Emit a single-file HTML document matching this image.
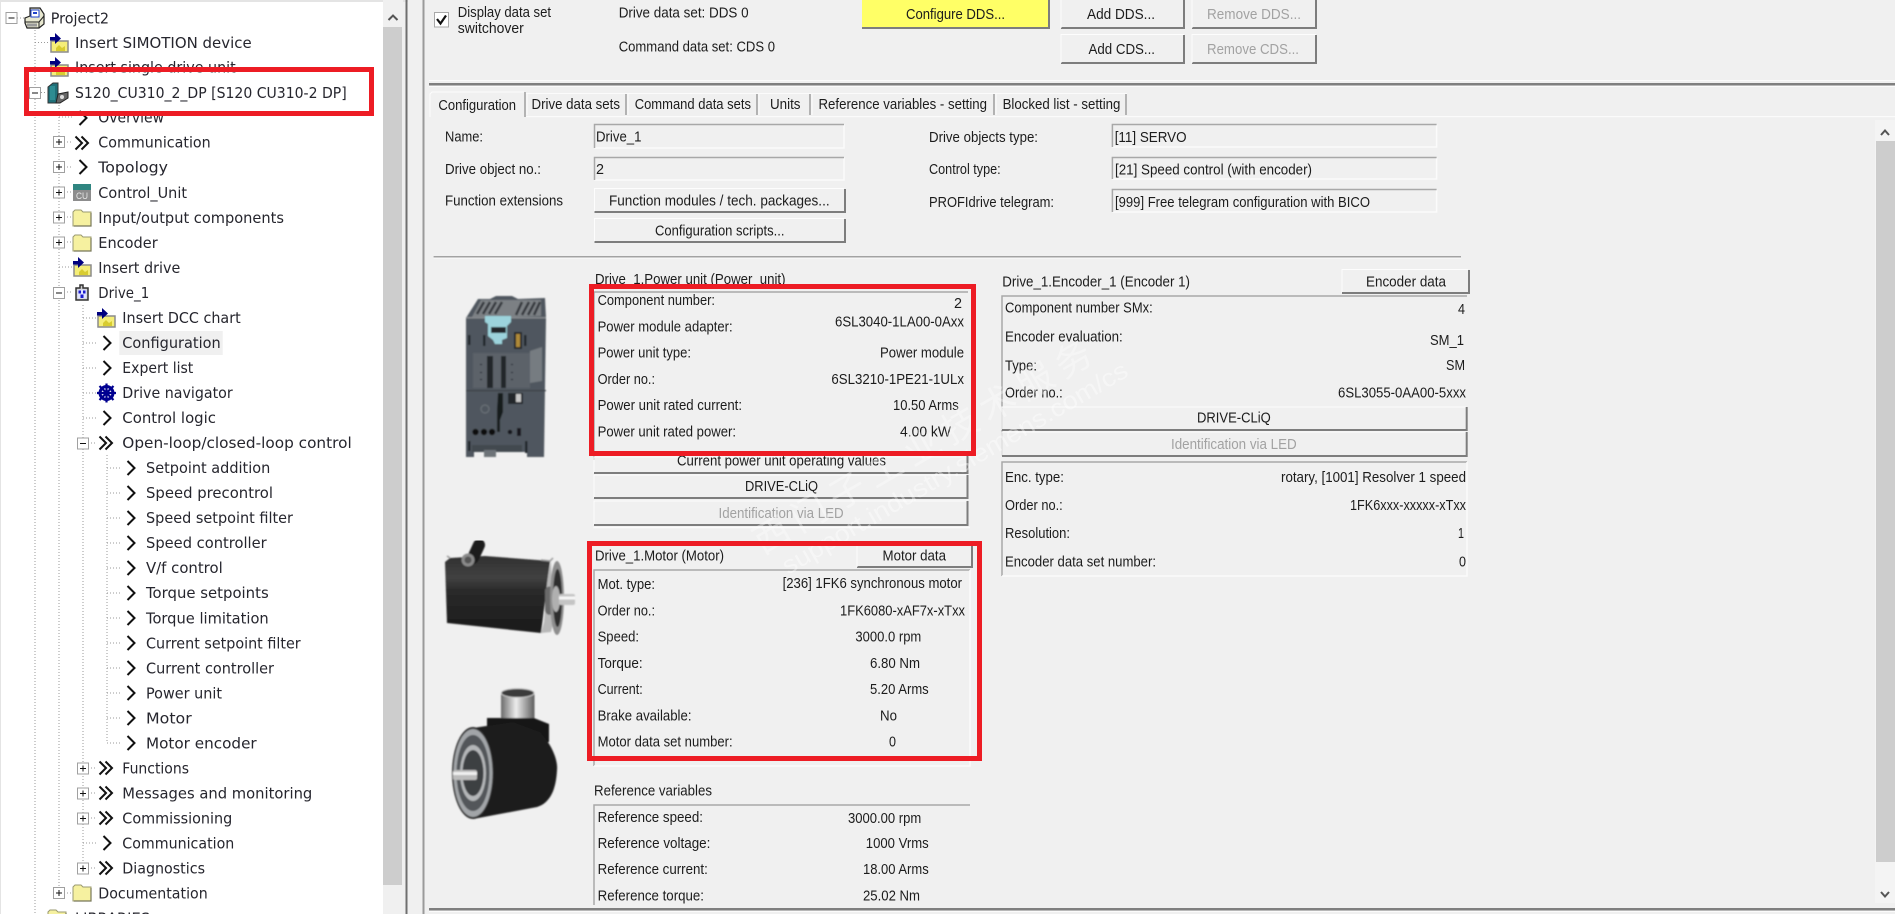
<!DOCTYPE html>
<html lang="en">
<head>
<meta charset="utf-8">
<title>Drive_1 Configuration</title>
<style>
html,body{margin:0;padding:0;width:1895px;height:914px;overflow:hidden;background:#f0f0f0}
svg{display:block;position:absolute;left:0;top:0;filter:blur(.35px)}
text{font-family:"Liberation Sans",sans-serif;font-size:14.5px;fill:#1c1c1c;white-space:pre}
.t text{font-family:"DejaVu Sans",sans-serif;font-size:15.5px;fill:#26262e}
.d{fill:#a2a2a2}
.dl{fill:none;stroke:#9a9a9a;stroke-width:1;stroke-dasharray:1 2}
.bx{fill:#fff;stroke:#a0a0a0;stroke-width:1}
.sg{fill:none;stroke:#111;stroke-width:1}
.ch{fill:none;stroke:#111;stroke-width:2}
.btn{fill:#f0f0f0}
.hi{fill:none;stroke:#fdfdfd;stroke-width:1}
.lo{fill:none;stroke:#7d7d7d;stroke-width:2}
.gs{fill:none;stroke:#a8a8a8;stroke-width:1.5}
.gw{fill:none;stroke:#fbfbfb;stroke-width:1.5}
.red{fill:none;stroke:#ed1c24;stroke-width:5}
</style>
</head>
<body>
<svg width="1895" height="914" viewBox="0 0 1895 914" xmlns="http://www.w3.org/2000/svg">
<defs>
<filter id="sf" x="-5%" y="-5%" width="110%" height="110%"><feGaussianBlur stdDeviation=".7"/></filter>
<g id="c1"><path class="ch" d="M-3.500 -7L3.500 0L-3.500 7"/></g>
<g id="c2"><path class="ch" d="M-6.500 -6.500L0 0L-6.500 6.500M-.5 -6.500L6 0L-.5 6.500"/></g>
<g id="pl"><rect class="bx" x="-5.500" y="-5.500" width="11" height="11"/><path class="sg" d="M-3 0H3M0 -3V3"/></g>
<g id="mi"><rect class="bx" x="-5.500" y="-5.500" width="11" height="11"/><path class="sg" d="M-3 0H3"/></g>
<g id="fo"><path d="M0 -6L2 -8H8L10 -6H18V8H0Z" fill="#f6f1a0" stroke="#9a9a70" stroke-width="1"/><path d="M1 8H18V-5" fill="none" stroke="#77775a" stroke-width="1.200"/></g>
<g id="ins"><path d="M1 -2H18V9H1Z" fill="#f5ee78" stroke="#8b8b8b" stroke-width="1.500"/><path d="M6 5l3 -3l3 3l3 -2v5H6Z" fill="#d8cc30"/><path d="M0 -6H5V-10L11 -4.500L5 1V-2.500H0Z" fill="#000080"/></g>
<linearGradient id="sil" x1="0" x2="1" y1="0" y2="0"><stop offset="0" stop-color="#6a6a6a"/><stop offset=".45" stop-color="#ededed"/><stop offset="1" stop-color="#5c5c5c"/></linearGradient>
<linearGradient id="blk" x1="0" x2="0" y1="0" y2="1"><stop offset="0" stop-color="#303030"/><stop offset=".28" stop-color="#414141"/><stop offset=".45" stop-color="#2a2a2a"/><stop offset="1" stop-color="#1a1a1a"/></linearGradient>
</defs>

<!-- tree panel -->
<rect x="0" y="0" width="383" height="914" fill="#fff"/>
<rect x="0" y="0" width="408" height="2" fill="#e4e4e4"/>
<rect x="0" y="0" width="1" height="914" fill="#e4e4e4"/>
<rect x="383" y="0" width="20" height="914" fill="#f0f0f0"/>
<rect x="383" y="27" width="19" height="858" fill="#cdcdcd"/>
<path d="M388.500 20L393 15.500L397.500 20" fill="none" stroke="#555" stroke-width="2"/>
<rect x="405.500" y="0" width="2" height="914" fill="#6f6f6f"/>
<rect x="422.500" y="0" width="2" height="914" fill="#9a9a9a"/>

<rect x="119.300" y="331" width="103.400" height="24" fill="#f0f0f0"/>

<!-- tree lines -->
<path class="dl" d="M35 30V914M59 105V893M83 305V868M107 455V743"/>
<path class="dl" d="M17 18H25M35 42.500H48M35 92.500H46M59 117H72M64 142H72M64 167H72M64 192H72M64 217H72M64 242H72M59 267H72M64 292H72M83 318H96M83 343H96M83 368H96M83 393H96M83 418H96M88 443H96M107 468H120M107 493H120M107 518H120M107 543H120M107 568H120M107 593H120M107 618H120M107 643H120M107 668H120M107 693H120M107 718H120M107 743H120M88 768H96M88 793H96M88 818H96M83 843H96M88 868H96M64 893H72"/>

<!-- expanders -->
<use href="#mi" x="11.500" y="18"/><use href="#mi" x="35" y="93"/>
<use href="#pl" x="59" y="142"/><use href="#pl" x="59" y="167"/><use href="#pl" x="59" y="192.500"/><use href="#pl" x="59" y="217.500"/><use href="#pl" x="59" y="242.500"/><use href="#mi" x="59" y="293"/>
<use href="#mi" x="83" y="443.500"/><use href="#pl" x="83" y="768.500"/><use href="#pl" x="83" y="793.500"/><use href="#pl" x="83" y="818.500"/><use href="#pl" x="83" y="868.500"/><use href="#pl" x="59" y="893"/>

<!-- tree icons -->
<g transform="translate(25,8)"><path d="M5 0H15L19 6V16L14 20H2L0 15V10L5 8Z" fill="#e8e8d0" stroke="#222" stroke-width="1.200"/><rect x="6" y="2" width="8" height="7" fill="#fff" stroke="#2244cc"/><rect x="8" y="4" width="4" height="2" fill="#2244cc"/><path d="M0 14H14V20M14 14L19 8" fill="none" stroke="#222"/><rect x="2" y="15.500" width="10" height="3" fill="#9a9a9a"/></g>
<use href="#ins" x="50" y="43"/><use href="#ins" x="50" y="67"/>
<g transform="translate(48,83)"><path d="M0 4L5 0H10V20H0Z" fill="#1f6f78" stroke="#333"/><rect x="2" y="3" width="5" height="14" fill="#2e8c92"/><path d="M10 11L20 9V15L12 20H8Z" fill="#666" stroke="#222"/><circle cx="14" cy="14" r="2" fill="#ddd"/></g>
<g transform="translate(73,184)"><rect width="18" height="17" fill="#8d8d8d"/><rect width="18" height="6" fill="#2f8580"/><text x="3" y="15" style="font-size:9px;fill:#e8e8e8;font-family:'Liberation Sans',sans-serif" textLength="12" lengthAdjust="spacingAndGlyphs">CU</text></g>
<use href="#fo" x="73" y="218"/><use href="#fo" x="73" y="243"/>
<use href="#ins" x="73" y="267"/>
<g transform="translate(76,285)"><path d="M4 0H7V3H12V15H0V3H4Z" fill="#ccc" stroke="#333" stroke-width="1.500"/><rect x="1.500" y="4.500" width="9" height="9" fill="#dfe3ff"/><rect x="2.500" y="5.500" width="2.500" height="3" fill="#1a1acc"/><rect x="7" y="5.500" width="2.500" height="3" fill="#1a1acc"/><rect x="4.500" y="9.500" width="3" height="3.500" fill="#1a1acc"/></g>
<use href="#ins" x="97" y="318"/>
<use href="#c1" x="107" y="343"/><use href="#c1" x="107" y="368"/>
<g transform="translate(106.500,393)"><circle r="6.500" fill="none" stroke="#000090" stroke-width="3"/><path d="M0 -9.500V9.500M-9.500 0H9.500M-7 -7L7 7M-7 7L7 -7" stroke="#000090" stroke-width="2.200"/><circle r="2.500" fill="#000090"/></g>
<use href="#c1" x="107" y="418"/><use href="#c2" x="106" y="443"/>
<use href="#c1" x="131" y="468"/><use href="#c1" x="131" y="493"/><use href="#c1" x="131" y="518"/><use href="#c1" x="131" y="543"/><use href="#c1" x="131" y="568"/><use href="#c1" x="131" y="593"/><use href="#c1" x="131" y="618"/><use href="#c1" x="131" y="643"/><use href="#c1" x="131" y="668"/><use href="#c1" x="131" y="693"/><use href="#c1" x="131" y="718"/><use href="#c1" x="131" y="743"/>
<use href="#c2" x="106" y="768"/><use href="#c2" x="106" y="793"/><use href="#c2" x="106" y="818"/><use href="#c1" x="107" y="843"/><use href="#c2" x="106" y="868"/>
<use href="#c1" x="83" y="118"/><use href="#c2" x="82" y="143"/><use href="#c1" x="83" y="167"/>
<use href="#fo" x="73" y="893"/><use href="#fo" x="48" y="918"/>

<!-- tree text -->
<g class="t">
<text x="50.700" y="23.500" textLength="58.300" lengthAdjust="spacingAndGlyphs">Project2</text>
<text x="75" y="48" textLength="176.700" lengthAdjust="spacingAndGlyphs">Insert SIMOTION device</text>
<text x="75" y="72.500" textLength="160.700" lengthAdjust="spacingAndGlyphs">Insert single drive unit</text>
<text x="75" y="98" textLength="271.700" lengthAdjust="spacingAndGlyphs">S120_CU310_2_DP [S120 CU310-2 DP]</text>
<text x="98.300" y="122.500" textLength="65.700" lengthAdjust="spacingAndGlyphs">Overview</text>
<text x="98.300" y="147.500" textLength="112.400" lengthAdjust="spacingAndGlyphs">Communication</text>
<text x="98.300" y="172.500" textLength="69.700" lengthAdjust="spacingAndGlyphs">Topology</text>
<text x="98.300" y="198" textLength="88.700" lengthAdjust="spacingAndGlyphs">Control_Unit</text>
<text x="98.300" y="223" textLength="185.700" lengthAdjust="spacingAndGlyphs">Input/output components</text>
<text x="98.300" y="248" textLength="59.400" lengthAdjust="spacingAndGlyphs">Encoder</text>
<text x="98.300" y="273" textLength="82" lengthAdjust="spacingAndGlyphs">Insert drive</text>
<text x="98.300" y="298" textLength="51" lengthAdjust="spacingAndGlyphs">Drive_1</text>
<g transform="translate(0,-.7)">
<text x="122.300" y="323.500" textLength="118.400" lengthAdjust="spacingAndGlyphs">Insert DCC chart</text>
<text x="122.300" y="348.500" textLength="98.400" lengthAdjust="spacingAndGlyphs">Configuration</text>
<text x="122.300" y="373.500" textLength="71" lengthAdjust="spacingAndGlyphs">Expert list</text>
<text x="122.300" y="398.500" textLength="110.400" lengthAdjust="spacingAndGlyphs">Drive navigator</text>
<text x="122.300" y="423.500" textLength="93.700" lengthAdjust="spacingAndGlyphs">Control logic</text>
<text x="122.300" y="448.500" textLength="229.400" lengthAdjust="spacingAndGlyphs">Open-loop/closed-loop control</text>
<text x="146" y="473.500" textLength="124.300" lengthAdjust="spacingAndGlyphs">Setpoint addition</text>
<text x="146" y="498.500" textLength="127" lengthAdjust="spacingAndGlyphs">Speed precontrol</text>
<text x="146" y="523.500" textLength="147" lengthAdjust="spacingAndGlyphs">Speed setpoint filter</text>
<text x="146" y="548.500" textLength="120.700" lengthAdjust="spacingAndGlyphs">Speed controller</text>
<text x="146" y="573.500" textLength="76.700" lengthAdjust="spacingAndGlyphs">V/f control</text>
<text x="146" y="598.500" textLength="122.700" lengthAdjust="spacingAndGlyphs">Torque setpoints</text>
</g>
<text x="146" y="623.500" textLength="122.700" lengthAdjust="spacingAndGlyphs">Torque limitation</text>
<text x="146" y="648.500" textLength="154.700" lengthAdjust="spacingAndGlyphs">Current setpoint filter</text>
<text x="146" y="673.500" textLength="128" lengthAdjust="spacingAndGlyphs">Current controller</text>
<text x="146" y="698.500" textLength="76" lengthAdjust="spacingAndGlyphs">Power unit</text>
<text x="146" y="723.500" textLength="45.700" lengthAdjust="spacingAndGlyphs">Motor</text>
<text x="146" y="748.500" textLength="110.700" lengthAdjust="spacingAndGlyphs">Motor encoder</text>
<text x="122.300" y="773.500" textLength="66.700" lengthAdjust="spacingAndGlyphs">Functions</text>
<text x="122.300" y="798.500" textLength="190" lengthAdjust="spacingAndGlyphs">Messages and monitoring</text>
<text x="122.300" y="823.500" textLength="110" lengthAdjust="spacingAndGlyphs">Commissioning</text>
<text x="122.300" y="848.500" textLength="112" lengthAdjust="spacingAndGlyphs">Communication</text>
<text x="122.300" y="873.500" textLength="82.700" lengthAdjust="spacingAndGlyphs">Diagnostics</text>
<text x="98.300" y="898.500" textLength="109.400" lengthAdjust="spacingAndGlyphs">Documentation</text>
<text x="75" y="923.500" textLength="75" lengthAdjust="spacingAndGlyphs">LIBRARIES</text>
</g>

<!-- top strip -->
<rect x="434.500" y="12.500" width="14" height="14.500" fill="#fff" stroke="#a8a8a8"/>
<path d="M437 19L440.500 23.500L446 15.500" fill="none" stroke="#111" stroke-width="2.200"/>
<text x="457.800" y="17" textLength="93.200" lengthAdjust="spacingAndGlyphs">Display data set</text>
<text x="457.800" y="33" textLength="66" lengthAdjust="spacingAndGlyphs">switchover</text>
<text x="618.700" y="17.700" textLength="129.900" lengthAdjust="spacingAndGlyphs">Drive data set: DDS 0</text>
<text x="618.700" y="51.700" textLength="156.300" lengthAdjust="spacingAndGlyphs">Command data set: CDS 0</text>

<rect x="862" y="-2" width="187" height="30" fill="#ffff66"/>
<path class="lo" d="M862 28H1049V0"/>
<text x="906" y="19" textLength="99" lengthAdjust="spacingAndGlyphs">Configure DDS...</text>
<path class="lo" d="M1061 28H1184V0"/><path class="hi" d="M1061 28V0"/>
<text x="1087" y="19" textLength="68" lengthAdjust="spacingAndGlyphs">Add DDS...</text>
<path class="lo" d="M1192 28H1316V0"/><path class="hi" d="M1192 28V0"/>
<text class="d" x="1207" y="19" textLength="94" lengthAdjust="spacingAndGlyphs">Remove DDS...</text>
<path class="lo" d="M1061 63H1184V35"/><path class="hi" d="M1061 63V34.500H1184"/>
<text x="1088.500" y="54" textLength="66.500" lengthAdjust="spacingAndGlyphs">Add CDS...</text>
<path class="lo" d="M1192 63H1316V35"/><path class="hi" d="M1192 63V34.500H1316"/>
<text class="d" x="1207" y="54" textLength="92" lengthAdjust="spacingAndGlyphs">Remove CDS...</text>

<rect x="429" y="80" width="1466" height="1" fill="#fbfbfb"/>
<rect x="429" y="83" width="1466" height="2.500" fill="#7f7f7f"/>
<rect x="429" y="86" width="1466" height="1" fill="#fbfbfb"/>

<!-- tabs -->
<rect x="526" y="116" width="1369" height="1.200" fill="#fbfbfb"/>
<rect x="526" y="93" width="601" height="1" fill="#fbfbfb"/>
<path class="hi" d="M430 117V94L432 92H524"/>
<path d="M525 92V117" stroke="#8a8a8a" stroke-width="1.200"/>
<text x="438.400" y="110" textLength="77.600" lengthAdjust="spacingAndGlyphs">Configuration</text>
<path d="M626 94V115M757 94V115M810 94V115M994 94V115M1126 94V115" stroke="#8a8a8a" stroke-width="1.200"/>
<path d="M527 94V115M628 94V115M759 94V115M812 94V115M996 94V115" stroke="#fbfbfb" stroke-width="1"/>
<text x="531.500" y="109" textLength="88.500" lengthAdjust="spacingAndGlyphs">Drive data sets</text>
<text x="634.700" y="109" textLength="116.300" lengthAdjust="spacingAndGlyphs">Command data sets</text>
<text x="770" y="109" textLength="30.500" lengthAdjust="spacingAndGlyphs">Units</text>
<text x="818.500" y="109" textLength="168.500" lengthAdjust="spacingAndGlyphs">Reference variables - setting</text>
<text x="1002.600" y="109" textLength="117.800" lengthAdjust="spacingAndGlyphs">Blocked list - setting</text>

<!-- scroll right -->
<rect x="1875" y="120" width="20" height="783" fill="#f4f4f4"/>
<rect x="1876" y="141" width="19" height="721" fill="#cdcdcd"/>
<path d="M1881 135L1885 130.500L1889 135" fill="none" stroke="#555" stroke-width="2"/>
<path d="M1881 892L1885 896.500L1889 892" fill="none" stroke="#555" stroke-width="2"/>
<rect x="429" y="908" width="1466" height="2.500" fill="#7f7f7f"/>
<rect x="429" y="911" width="1466" height="1" fill="#fbfbfb"/>

<!-- form -->
<text x="445" y="141.700" textLength="38" lengthAdjust="spacingAndGlyphs">Name:</text>
<text x="445" y="174" textLength="96" lengthAdjust="spacingAndGlyphs">Drive object no.:</text>
<text x="445" y="205.700" textLength="118" lengthAdjust="spacingAndGlyphs">Function extensions</text>
<path class="gw" d="M844 124.500V148H594.500"/><path class="gs" d="M594.500 148V124.500H844"/>
<text x="596" y="141.700" textLength="45.500" lengthAdjust="spacingAndGlyphs">Drive_1</text>
<path class="gw" d="M844 157.500V180H594.500"/><path class="gs" d="M594.500 180V157.500H844"/>
<text x="596" y="174" textLength="8" lengthAdjust="spacingAndGlyphs">2</text>
<path class="hi" d="M594.500 212V188.500H844"/><path class="lo" d="M594.500 212H845V189"/>
<text x="609" y="205.700" textLength="220.600" lengthAdjust="spacingAndGlyphs">Function modules / tech. packages...</text>
<path class="hi" d="M594.500 242V218.500H844"/><path class="lo" d="M594.500 242H845V219"/>
<text x="655" y="235.500" textLength="129.500" lengthAdjust="spacingAndGlyphs">Configuration scripts...</text>

<text x="929" y="142" textLength="109" lengthAdjust="spacingAndGlyphs">Drive objects type:</text>
<text x="929" y="174" textLength="71.700" lengthAdjust="spacingAndGlyphs">Control type:</text>
<text x="929" y="207" textLength="125" lengthAdjust="spacingAndGlyphs">PROFIdrive telegram:</text>
<path class="gw" d="M1436.600 124.500V147H1112.400"/><path class="gs" d="M1112.400 147V124.500H1436.600"/>
<text x="1114.700" y="142" textLength="71.900" lengthAdjust="spacingAndGlyphs">[11] SERVO</text>
<path class="gw" d="M1436.600 157.500V179H1112.400"/><path class="gs" d="M1112.400 179V157.500H1436.600"/>
<text x="1115" y="174.500" textLength="197" lengthAdjust="spacingAndGlyphs">[21] Speed control (with encoder)</text>
<path class="gw" d="M1436.600 189.500V212H1112.400"/><path class="gs" d="M1112.400 212V189.500H1436.600"/>
<text x="1115" y="207" textLength="255" lengthAdjust="spacingAndGlyphs">[999] Free telegram configuration with BICO</text>

<rect x="433.600" y="256" width="1027.400" height="1.500" fill="#a2a2a2"/>
<rect x="433.600" y="257.500" width="1027.400" height="1" fill="#fbfbfb"/>

<!-- power unit image -->
<g filter="url(#sf)">
<path d="M466 318L478 299H490L496 296L512 296L518 299L545 298L546 318L544 457H527V452H474V457H466Z" fill="#50575e"/>
<path d="M472 317L481 300H512L518 300L541 300L541 316L515 317Z" fill="#7c8084"/>
<path d="M477 314L484 302M483 314L490 302M489 314L496 302M495 314L502 302M516 315L522 302M522 315L529 302M528 315L535 302M534 315L540 302" stroke="#34383c" stroke-width="2.500"/>
<rect x="466" y="317" width="80" height="1.500" fill="#85898d"/>
<path d="M485 316H511V322L507 326V338L502 340V344H495L493 340L488 336V324L485 322Z" fill="#9cd3dc"/>
<rect x="491" y="327" width="15" height="6" fill="#22262a"/>
<rect x="514" y="332" width="8" height="17" fill="#24282c"/><rect x="516" y="334" width="4" height="13" fill="#b08a38"/>
<rect x="468" y="335" width="2.500" height="10" fill="#22262a"/><rect x="483" y="335" width="2.500" height="11" fill="#22262a"/><rect x="524" y="335" width="2.500" height="11" fill="#22262a"/>
<rect x="473" y="353" width="57" height="35" fill="#5b6269"/>
<rect x="487" y="356" width="6" height="32" fill="#23272b"/><rect x="501" y="356" width="5" height="32" fill="#23272b"/>
<path d="M481 364v1M481 372v1M481 379v1M512 364v1M512 372v1M512 379v1" stroke="#101214" stroke-width="2"/>
<path d="M530 351L542 347V381L530 383Z" fill="#767c81"/>
<rect x="466" y="390" width="80" height="1.200" fill="#3a4045"/>
<path d="M498 393H503V412L500 420V432H497V410Z" fill="#191c1f"/>
<rect x="508" y="393" width="15" height="11" fill="#23272b"/><rect x="516" y="394" width="5" height="8" fill="#c8c8c8"/>
<circle cx="485" cy="409" r="4" fill="none" stroke="#6e757b"/>
<circle cx="475.500" cy="432" r="3.200" fill="#0e0e0e"/><circle cx="484" cy="432" r="3.200" fill="#0e0e0e"/><circle cx="492" cy="432" r="3.200" fill="#0e0e0e"/>
<circle cx="510" cy="432" r="2.300" fill="#15181a"/><rect x="517" y="428" width="4" height="8" fill="#15181a"/>
<path d="M472 445H522V452H472Z" fill="#434a50"/>
<rect x="484" y="450" width="12" height="7" fill="#6d7378"/>
<rect x="468" y="441" width="2.500" height="10" fill="#24282b"/><rect x="525" y="441" width="2.500" height="12" fill="#24282b"/>
</g>

<!-- motor image -->
<g filter="url(#sf)">
<path d="M445 562L450 558L485 556L550 561L541 633L447 623Z" fill="url(#blk)"/>
<path d="M473 558L479 545" stroke="#1c1c1c" stroke-width="12" stroke-linecap="round"/>
<circle cx="468" cy="560" r="6.500" fill="#8a8a8a"/><circle cx="468" cy="560" r="3.500" fill="#555"/>
<path d="M541 560L550 561L553 558M450 558L447 556" fill="none" stroke="#999" stroke-width="1.500"/>
<path d="M541 633L544 622C546 600 546 580 551 561L552 585L554 620L551 632Z" fill="#b8b8b8"/>
<path d="M545 590C547 585 553 585 554 592L554 612C551 616 546 616 545 610Z" fill="#6a6a6a"/>
<ellipse cx="557" cy="598" rx="7" ry="37" fill="#8d8d8d"/>
<ellipse cx="557.500" cy="598" rx="4.500" ry="29" fill="#2e2e2e"/>
<ellipse cx="556" cy="599" rx="4" ry="13" fill="#b0b0b0"/>
<rect x="559" y="594" width="16" height="11" rx="2" fill="#c4c4c4"/>
<rect x="559" y="596.500" width="16" height="3" fill="#f6f6f6"/>
</g>

<!-- encoder image -->
<g filter="url(#sf)">
<rect x="501" y="692" width="33.500" height="30" rx="3" fill="url(#sil)"/>
<ellipse cx="517.700" cy="693" rx="16.500" ry="4.500" fill="#3a3a3a" stroke="#cfcfcf" stroke-width="1"/>
<path d="M487 718H534L549 724V742L515 742L487 732Z" fill="#141414"/>
<path d="M473 728L513 722L540 732C552 745 558 760 557 770C556 790 550 803 537 807L473 819Z" fill="#1b1b1b"/>
<ellipse cx="473" cy="773" rx="21" ry="46" fill="#2a2a2a"/>
<ellipse cx="473" cy="773" rx="19.500" ry="44" fill="#a2a5a8"/>
<ellipse cx="473" cy="773" rx="16.500" ry="38" fill="#52565a"/>
<ellipse cx="473" cy="773" rx="13" ry="28" fill="#b4b6b8"/>
<ellipse cx="473" cy="773" rx="10.500" ry="23" fill="#3c3f42"/>
<rect x="453" y="770" width="24" height="10" rx="2" fill="#bcbcbc"/>
<rect x="453" y="772" width="24" height="3" fill="#f0f0f0"/>
</g>

<!-- power unit block -->
<text x="595" y="284" textLength="190.500" lengthAdjust="spacingAndGlyphs">Drive_1.Power unit (Power_unit)</text>
<path class="gs" d="M594 460V292H968"/>
<text x="597.600" y="305" textLength="117.400" lengthAdjust="spacingAndGlyphs">Component number:</text>
<text x="954" y="308" textLength="8" lengthAdjust="spacingAndGlyphs">2</text>
<text x="597.600" y="331.700" textLength="135" lengthAdjust="spacingAndGlyphs">Power module adapter:</text>
<text x="835" y="326.700" textLength="129" lengthAdjust="spacingAndGlyphs">6SL3040-1LA00-0Axx</text>
<text x="597.600" y="357.700" textLength="93.400" lengthAdjust="spacingAndGlyphs">Power unit type:</text>
<text x="880" y="357.700" textLength="84" lengthAdjust="spacingAndGlyphs">Power module</text>
<text x="597.600" y="384" textLength="57.400" lengthAdjust="spacingAndGlyphs">Order no.:</text>
<text x="831.400" y="384" textLength="132.600" lengthAdjust="spacingAndGlyphs">6SL3210-1PE21-1ULx</text>
<text x="597.600" y="410" textLength="144.400" lengthAdjust="spacingAndGlyphs">Power unit rated current:</text>
<text x="893" y="410" textLength="65.700" lengthAdjust="spacingAndGlyphs">10.50 Arms</text>
<text x="597.600" y="436.500" textLength="138.400" lengthAdjust="spacingAndGlyphs">Power unit rated power:</text>
<text x="900" y="436.500" textLength="51" lengthAdjust="spacingAndGlyphs">4.00 kW</text>

<path class="hi" d="M594 473V457H967"/><path class="lo" d="M594 473H967.500V456"/>
<text x="677" y="465.700" textLength="209" lengthAdjust="spacingAndGlyphs">Current power unit operating values</text>
<path class="hi" d="M594 498V475H967"/><path class="lo" d="M594 498H967.500V475"/>
<text x="745" y="491" textLength="73" lengthAdjust="spacingAndGlyphs">DRIVE-CLiQ</text>
<path class="hi" d="M594 525V501H967"/><path class="lo" d="M594 525H967.500V501"/>
<text class="d" x="718.500" y="518" textLength="125.100" lengthAdjust="spacingAndGlyphs">Identification via LED</text>
<path class="gw" d="M593.500 527.500H970"/>

<!-- motor block -->
<text x="595" y="560.700" textLength="129" lengthAdjust="spacingAndGlyphs">Drive_1.Motor (Motor)</text>
<path class="lo" d="M857 567H972V545"/><path class="hi" d="M857 567V545"/>
<text x="882.500" y="560.700" textLength="63.500" lengthAdjust="spacingAndGlyphs">Motor data</text>
<path class="gs" d="M594 766V570H970"/><path class="gw" d="M594 766H970V570"/>
<text x="597.600" y="589" textLength="57.400" lengthAdjust="spacingAndGlyphs">Mot. type:</text>
<text x="782.600" y="588" textLength="179.400" lengthAdjust="spacingAndGlyphs">[236] 1FK6 synchronous motor</text>
<text x="597.600" y="615.500" textLength="57.400" lengthAdjust="spacingAndGlyphs">Order no.:</text>
<text x="840" y="615.500" textLength="125" lengthAdjust="spacingAndGlyphs">1FK6080-xAF7x-xTxx</text>
<text x="597.600" y="641.700" textLength="41.400" lengthAdjust="spacingAndGlyphs">Speed:</text>
<text x="855.400" y="641.700" textLength="65.900" lengthAdjust="spacingAndGlyphs">3000.0 rpm</text>
<text x="597.600" y="668" textLength="45.100" lengthAdjust="spacingAndGlyphs">Torque:</text>
<text x="870" y="668" textLength="50" lengthAdjust="spacingAndGlyphs">6.80 Nm</text>
<text x="597.600" y="694" textLength="45.100" lengthAdjust="spacingAndGlyphs">Current:</text>
<text x="870" y="694" textLength="58.700" lengthAdjust="spacingAndGlyphs">5.20 Arms</text>
<text x="597.600" y="720.500" textLength="93.900" lengthAdjust="spacingAndGlyphs">Brake available:</text>
<text x="880" y="720.500" textLength="17" lengthAdjust="spacingAndGlyphs">No</text>
<text x="597.600" y="746.700" textLength="135" lengthAdjust="spacingAndGlyphs">Motor data set number:</text>
<text x="889" y="746.700" textLength="7" lengthAdjust="spacingAndGlyphs">0</text>

<!-- reference block -->
<text x="594" y="795.700" textLength="118" lengthAdjust="spacingAndGlyphs">Reference variables</text>
<path class="gs" d="M594 905V805H970"/>
<text x="597.600" y="822" textLength="105.400" lengthAdjust="spacingAndGlyphs">Reference speed:</text>
<text x="848" y="823" textLength="73.300" lengthAdjust="spacingAndGlyphs">3000.00 rpm</text>
<text x="597.600" y="848" textLength="112.800" lengthAdjust="spacingAndGlyphs">Reference voltage:</text>
<text x="865.800" y="848" textLength="62.900" lengthAdjust="spacingAndGlyphs">1000 Vrms</text>
<text x="597.600" y="874" textLength="110.200" lengthAdjust="spacingAndGlyphs">Reference current:</text>
<text x="863" y="874" textLength="65.700" lengthAdjust="spacingAndGlyphs">18.00 Arms</text>
<text x="597.600" y="900.500" textLength="106.400" lengthAdjust="spacingAndGlyphs">Reference torque:</text>
<text x="863" y="900.500" textLength="57" lengthAdjust="spacingAndGlyphs">25.02 Nm</text>

<!-- encoder block -->
<text x="1002.300" y="286.700" textLength="187.700" lengthAdjust="spacingAndGlyphs">Drive_1.Encoder_1 (Encoder 1)</text>
<path class="hi" d="M1342 293V269.500H1468"/><path class="lo" d="M1342 293H1469V270"/>
<text x="1366" y="286.700" textLength="80" lengthAdjust="spacingAndGlyphs">Encoder data</text>
<path class="gs" d="M1002 456V296H1467"/>
<text x="1005" y="312.700" textLength="147.700" lengthAdjust="spacingAndGlyphs">Component number SMx:</text>
<text x="1458" y="314" textLength="7" lengthAdjust="spacingAndGlyphs">4</text>
<text x="1005" y="341.500" textLength="117.700" lengthAdjust="spacingAndGlyphs">Encoder evaluation:</text>
<text x="1430" y="345" textLength="34" lengthAdjust="spacingAndGlyphs">SM_1</text>
<text x="1005" y="370.500" textLength="32" lengthAdjust="spacingAndGlyphs">Type:</text>
<text x="1446" y="370" textLength="19" lengthAdjust="spacingAndGlyphs">SM</text>
<text x="1005" y="397.500" textLength="57.700" lengthAdjust="spacingAndGlyphs">Order no.:</text>
<text x="1338" y="397.500" textLength="128" lengthAdjust="spacingAndGlyphs">6SL3055-0AA00-5xxx</text>
<path class="hi" d="M1002 430V407H1466"/><path class="lo" d="M1002 430H1466.700V407"/>
<text x="1197" y="422.500" textLength="73.700" lengthAdjust="spacingAndGlyphs">DRIVE-CLiQ</text>
<path class="hi" d="M1002 456V432H1466"/><path class="lo" d="M1002 456H1466.700V432"/>
<text class="d" x="1171" y="449" textLength="125.700" lengthAdjust="spacingAndGlyphs">Identification via LED</text>
<path class="gs" d="M1002 576V462H1467"/><path class="gw" d="M1002 576H1467V462"/>
<text x="1005" y="482" textLength="59" lengthAdjust="spacingAndGlyphs">Enc. type:</text>
<text x="1281" y="482" textLength="185" lengthAdjust="spacingAndGlyphs">rotary, [1001] Resolver 1 speed</text>
<text x="1005" y="510" textLength="57.700" lengthAdjust="spacingAndGlyphs">Order no.:</text>
<text x="1350" y="510" textLength="116" lengthAdjust="spacingAndGlyphs">1FK6xxx-xxxxx-xTxx</text>
<text x="1005" y="538" textLength="65" lengthAdjust="spacingAndGlyphs">Resolution:</text>
<text x="1458" y="538" textLength="6" lengthAdjust="spacingAndGlyphs">1</text>
<text x="1005" y="566.500" textLength="151" lengthAdjust="spacingAndGlyphs">Encoder data set number:</text>
<text x="1459" y="566.500" textLength="7" lengthAdjust="spacingAndGlyphs">0</text>

<!-- watermark -->
<g transform="translate(788,575) rotate(-30.300)">
<text x="0" y="0" textLength="396" lengthAdjust="spacingAndGlyphs" style="font-size:25px;fill:#fff;fill-opacity:.38">support.industry.siemens.com/cs</text>
<text x="-12" y="-30" textLength="385" style="font-size:36px;fill:#fff;fill-opacity:.36;font-family:'Liberation Sans','Noto Sans CJK SC',sans-serif">西门子工业技术服务</text>
</g>

<!-- red boxes -->
<rect class="red" x="26.500" y="69.500" width="345" height="44"/>
<rect class="red" x="591.500" y="286.500" width="382" height="167"/>
<rect class="red" x="589.500" y="543.500" width="390" height="215"/>
</svg>
</body>
</html>
